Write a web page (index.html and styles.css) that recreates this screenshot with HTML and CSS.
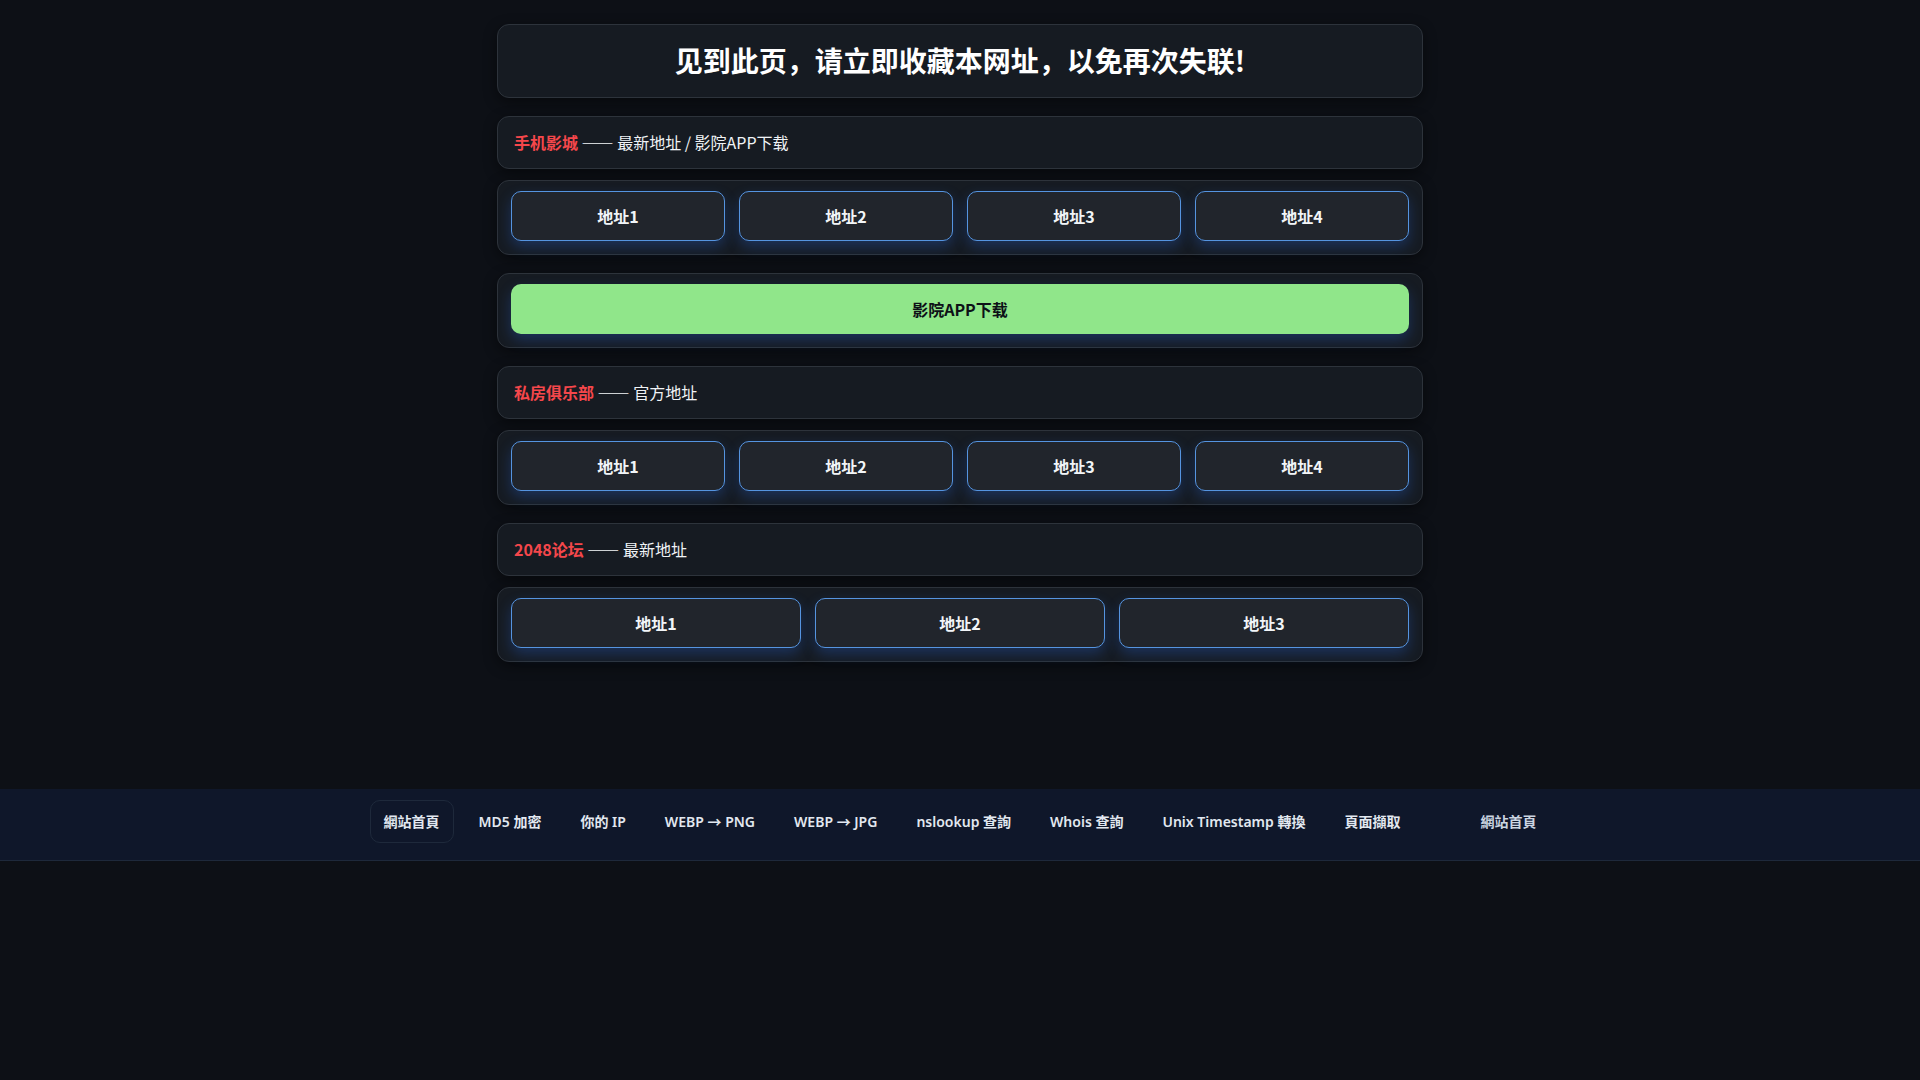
FILE: index.html
```html
<!DOCTYPE html>
<html lang="zh-CN">
<head>
<meta charset="utf-8">
<title>最新地址</title>
<link rel="stylesheet" href="styles.css">
</head>
<body>
<main class="wrap">
  <div class="title-box"><h1>见到此页，请立即收藏本网址，以免再次失联!</h1></div>

  <div class="head-card"><span class="hl">手机影城</span> —— 最新地址 / 影院APP下载</div>
  <div class="btn-card grid4">
    <a class="btn" href="#">地址1</a>
    <a class="btn" href="#">地址2</a>
    <a class="btn" href="#">地址3</a>
    <a class="btn" href="#">地址4</a>
  </div>
  <div class="btn-card">
    <a class="btn-green" href="#">影院APP下载</a>
  </div>

  <div class="head-card"><span class="hl">私房俱乐部</span> —— 官方地址</div>
  <div class="btn-card grid4">
    <a class="btn" href="#">地址1</a>
    <a class="btn" href="#">地址2</a>
    <a class="btn" href="#">地址3</a>
    <a class="btn" href="#">地址4</a>
  </div>

  <div class="head-card"><span class="hl">2048论坛</span> —— 最新地址</div>
  <div class="btn-card grid3">
    <a class="btn" href="#">地址1</a>
    <a class="btn" href="#">地址2</a>
    <a class="btn" href="#">地址3</a>
  </div>
</main>

<footer class="foot">
  <nav class="nav">
    <a class="nav-item active" href="#">網站首頁</a>
    <a class="nav-item" href="#">MD5 加密</a>
    <a class="nav-item" href="#">你的 IP</a>
    <a class="nav-item" href="#">WEBP → PNG</a>
    <a class="nav-item" href="#">WEBP → JPG</a>
    <a class="nav-item" href="#">nslookup 查詢</a>
    <a class="nav-item" href="#">Whois 查詢</a>
    <a class="nav-item" href="#">Unix Timestamp 轉換</a>
    <a class="nav-item" href="#">頁面擷取</a>
    <a class="nav-item last" href="#">網站首頁</a>
  </nav>
</footer>
</body>
</html>
```

FILE: styles.css
```css
* { box-sizing: border-box; }

html, body {
  margin: 0;
  padding: 0;
  background: #0d1016;
}

body {
  font-family: "Noto Sans CJK SC", "Noto Sans", sans-serif;
  color: #e6edf3;
  min-height: 1080px;
}

a { text-decoration: none; }

.wrap {
  width: 926px;
  margin: 24px auto 0;
}

.title-box {
  background: #161b22;
  border: 1px solid #2d333b;
  border-radius: 12px;
  padding: 18px 16px 19px;
  margin-bottom: 18px;
  box-shadow: 0 4px 14px rgba(0, 0, 0, 0.45);
}

.title-box h1 {
  margin: 0;
  font-size: 28px;
  line-height: 35px;
  font-weight: 700;
  text-align: center;
  color: #ffffff;
}

.head-card {
  background: #161b22;
  border: 1px solid #2d333b;
  border-radius: 12px;
  padding: 0 16px;
  height: 53px;
  line-height: 51px;
  font-size: 16px;
  color: #f0f3f6;
  margin-bottom: 11px;
  box-shadow: 0 4px 14px rgba(0, 0, 0, 0.45);
}

.hl {
  color: #f5474b;
  font-weight: 700;
}

.btn-card {
  background: #161b22;
  border: 1px solid #2d333b;
  border-radius: 12px;
  padding: 10px 13px 13px;
  margin-bottom: 18px;
  box-shadow: 0 4px 14px rgba(0, 0, 0, 0.45);
}

.grid4 {
  display: grid;
  grid-template-columns: repeat(4, 1fr);
  gap: 14px;
}

.grid3 {
  display: grid;
  grid-template-columns: repeat(3, 1fr);
  gap: 14px;
}

.btn {
  display: flex;
  align-items: center;
  justify-content: center;
  height: 50px;
  background: #21252c;
  border: 1px solid #5594e0;
  border-radius: 10px;
  color: #f2f5f8;
  font-size: 16px;
  font-weight: 700;
  box-shadow: 0 6px 14px rgba(40, 100, 210, 0.32);
}

.btn-green {
  display: flex;
  align-items: center;
  justify-content: center;
  height: 50px;
  background: #90e68a;
  border-radius: 10px;
  color: #0d1117;
  font-size: 16px;
  font-weight: 700;
  box-shadow: 0 6px 14px rgba(40, 100, 210, 0.32);
}

.foot {
  margin-top: 127px;
  background: #0f172a;
  border-bottom: 1px solid #1e293b;
  padding: 11px 0 17px;
}

.nav {
  display: flex;
  justify-content: center;
  gap: 11px;
  font-family: "Noto Sans", "Noto Sans CJK TC", sans-serif;
}

.nav-item {
  display: block;
  height: 43px;
  line-height: 41px;
  padding: 0 13px;
  border: 1px solid transparent;
  border-radius: 10px;
  font-size: 14px;
  font-weight: 600;
  color: #e2e8f0;
}

.nav-item.active {
  border-color: #1e293b;
}

.nav-item.last {
  margin-left: 41px;
  color: #cbd5e1;
}
```
